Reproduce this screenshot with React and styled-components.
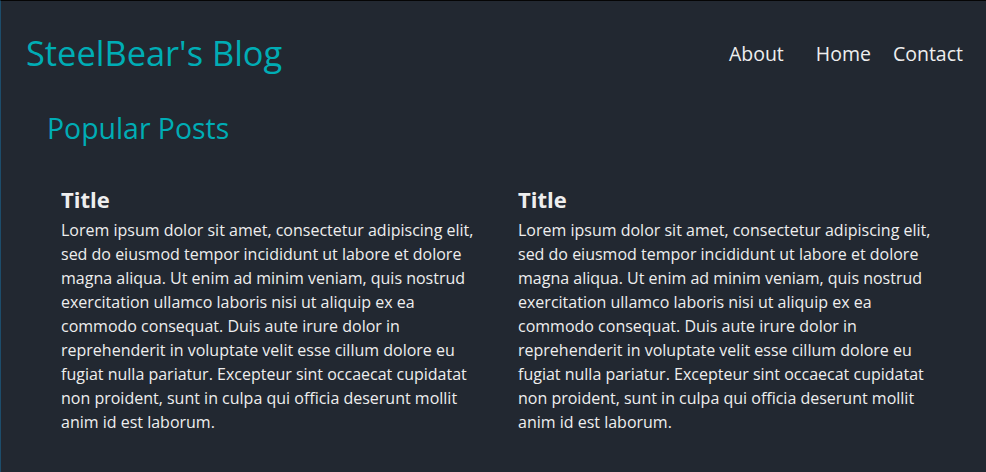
import React from "react";
import styled, { createGlobalStyle } from "styled-components";

const GlobalStyle = createGlobalStyle`
  *, *::before, *::after { box-sizing: border-box; }
  html, body { margin: 0; padding: 0; background: #222831; }
  body { font-family: "Open Sans", "Noto Sans CJK KR", sans-serif; color: #eeeeee; }
`;

const Page = styled.div`
  min-height: 100vh;
  background: #222831;
  border-top: 1px solid #050505;
  border-left: 1px solid #1d4d6b;
`;

const Header = styled.header`
  display: flex;
  align-items: center;
  justify-content: space-between;
  padding: 30.4px 23px 0 25px;
`;

const Logo = styled.h1`
  margin: 0;
  font-size: 34.4px;
  line-height: 44px;
  font-weight: 400;
  color: #00adb5;
`;

const Nav = styled.nav`
  display: flex;
  align-items: center;
  gap: 22px;
  padding-top: 2px;
`;

const NavLink = styled.a`
  font-size: 19.5px;
  line-height: 28px;
  color: #eeeeee;
  text-decoration: none;
  cursor: pointer;
  &:first-child { padding-right: 10px; }
`;

const Main = styled.main`
  padding: 0 27px 0 44px;
`;

const SectionTitle = styled.h2`
  margin: 34.6px 0 0 2px;
  font-size: 28.4px;
  line-height: 36px;
  font-weight: 400;
  color: #00adb5;
`;

const Grid = styled.section`
  display: grid;
  grid-template-columns: 1fr 1fr;
  margin-top: 39.4px;
`;

const Card = styled.article`
  padding: 0 17px 0 16px;
`;

const CardTitle = styled.h3`
  margin: 0;
  font-size: 22px;
  line-height: 28px;
  font-weight: 700;
  color: #eeeeee;
`;

const CardText = styled.p`
  margin: 4.3px 0 0 0;
  font-size: 16px;
  line-height: 24px;
  color: #eeeeee;
`;

const lorem =
  "Lorem ipsum dolor sit amet, consectetur adipiscing elit, sed do eiusmod tempor incididunt ut labore et dolore magna aliqua. Ut enim ad minim veniam, quis nostrud exercitation ullamco laboris nisi ut aliquip ex ea commodo consequat. Duis aute irure dolor in reprehenderit in voluptate velit esse cillum dolore eu fugiat nulla pariatur. Excepteur sint occaecat cupidatat non proident, sunt in culpa qui officia deserunt mollit anim id est laborum.";

const posts = [
  { id: 1, title: "Title", body: lorem },
  { id: 2, title: "Title", body: lorem },
];

export default function App() {
  return (
    <>
      <GlobalStyle />
      <Page>
        <Header>
          <Logo>SteelBear's Blog</Logo>
          <Nav>
            <NavLink>About</NavLink>
            <NavLink>Home</NavLink>
            <NavLink>Contact</NavLink>
          </Nav>
        </Header>
        <Main>
          <SectionTitle>Popular Posts</SectionTitle>
          <Grid>
            {posts.map((p) => (
              <Card key={p.id}>
                <CardTitle>{p.title}</CardTitle>
                <CardText>{p.body}</CardText>
              </Card>
            ))}
          </Grid>
        </Main>
      </Page>
    </>
  );
}
